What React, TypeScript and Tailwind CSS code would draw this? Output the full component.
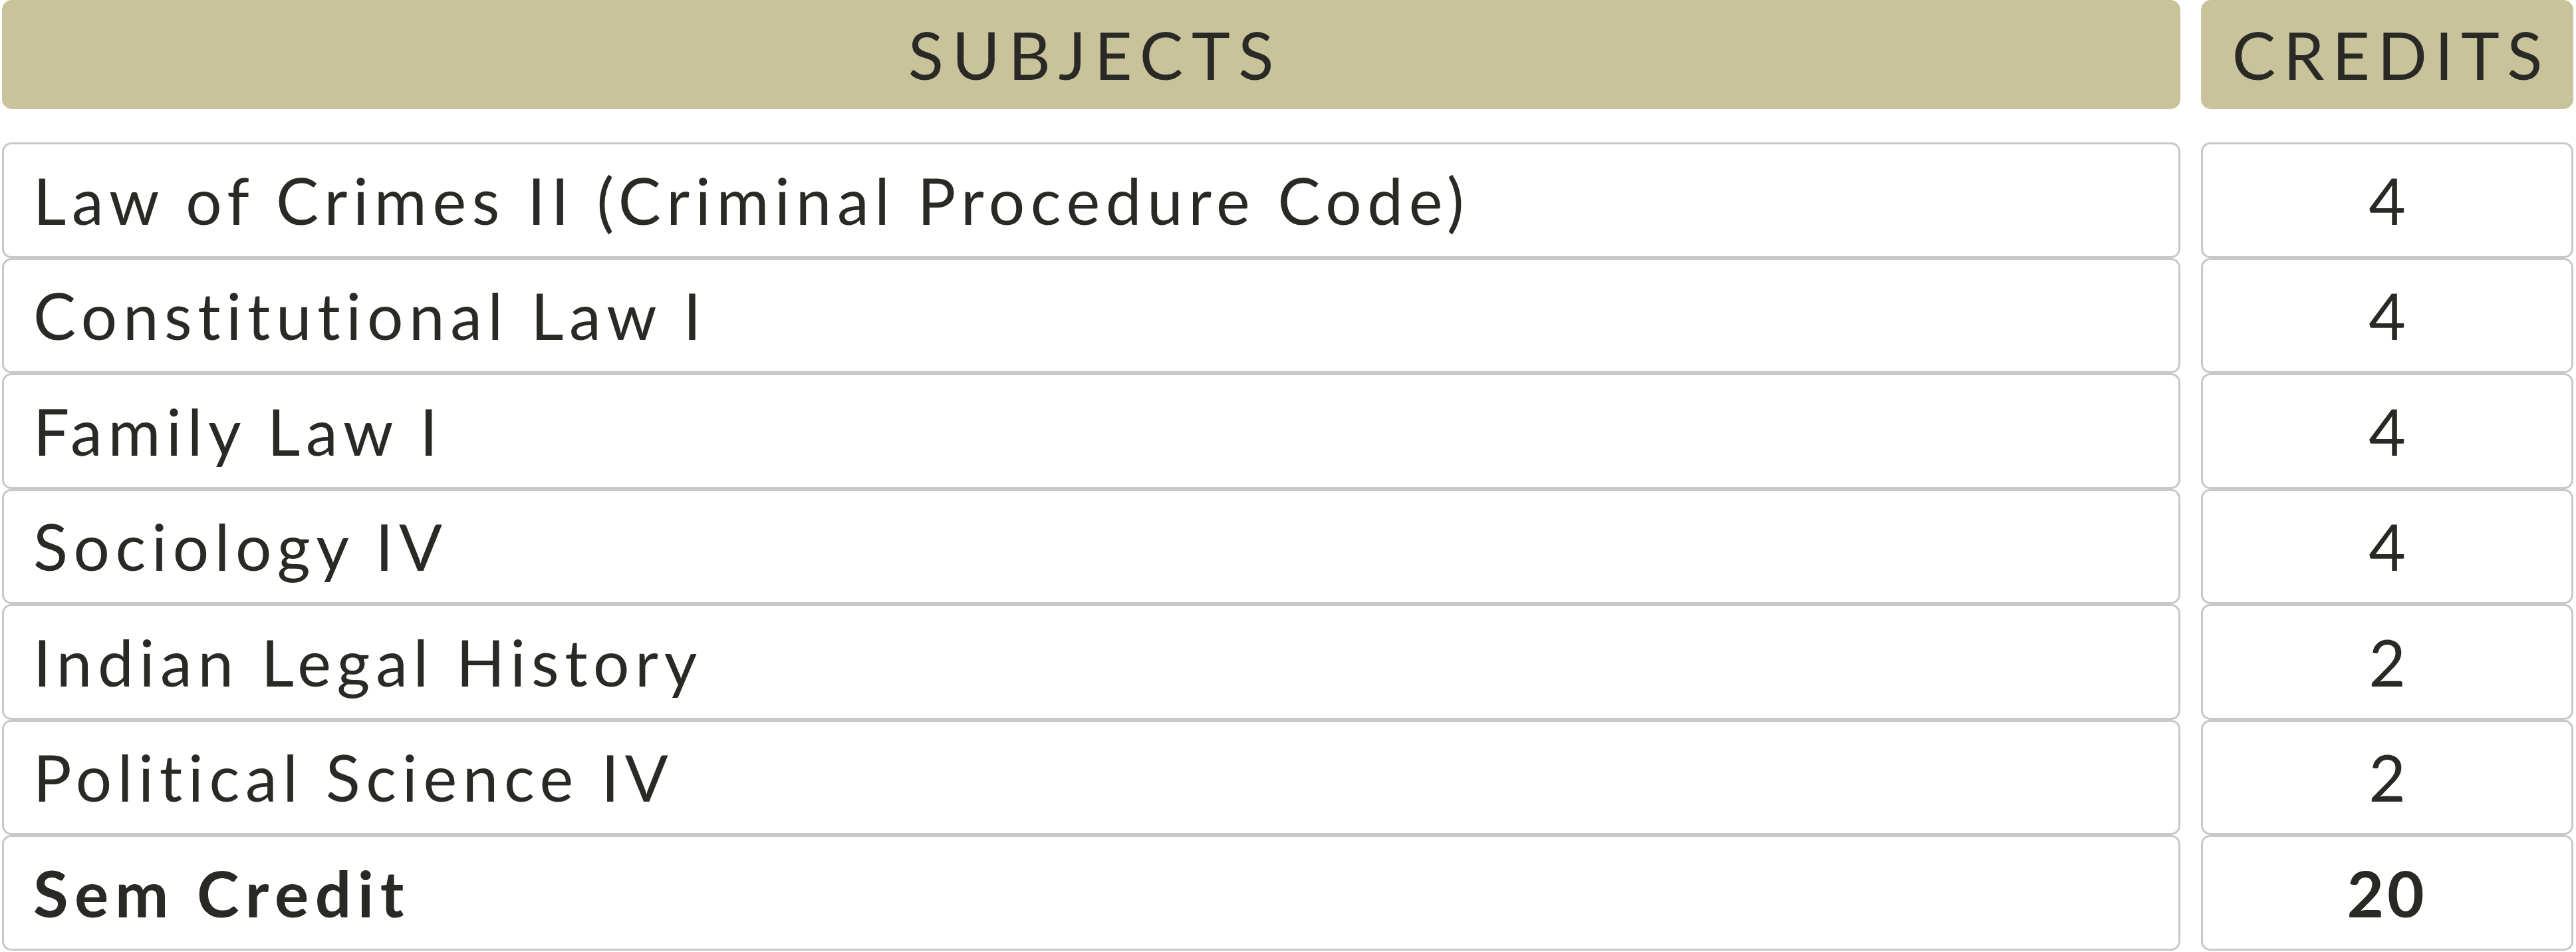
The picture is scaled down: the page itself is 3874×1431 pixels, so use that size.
const rows = [
    { subject: 'Law of Crimes II (Criminal Procedure Code)', credits: '4' },
    { subject: 'Constitutional Law I', credits: '4' },
    { subject: 'Family Law I', credits: '4' },
    { subject: 'Sociology IV', credits: '4' },
    { subject: 'Indian Legal History', credits: '2' },
    { subject: 'Political Science IV', credits: '2' },
]

export default function App() {
    return (
        <div className="w-[3874px] h-[1431px] bg-white pl-[3px] text-[#2a2926] font-['Lato','Noto_Sans',sans-serif] overflow-hidden">
            <div className="grid grid-cols-[3276px_560px] gap-x-[31px]">
                {/* Header */}
                <div className="h-[164px] rounded-[15px] bg-[#c8c39b] flex items-center justify-center pl-[12px] text-[98px] tracking-[0.13em] leading-none">
                    SUBJECTS
                </div>
                <div className="h-[164px] rounded-[15px] bg-[#c8c39b] flex items-center justify-center pl-[12px] text-[98px] tracking-[0.12em] leading-none">
                    CREDITS
                </div>

                <div className="col-span-2 h-[50px]" />

                {/* Rows */}
                {rows.map((row) => (
                    <div key={row.subject} className="contents">
                        <div className="h-[173.5px] border-[3px] border-[#c8c8c8] rounded-[14px] flex items-center pl-[44px] text-[96px] tracking-[0.09em] leading-none">
                            {row.subject}
                        </div>
                        <div className="h-[173.5px] border-[3px] border-[#c8c8c8] rounded-[14px] flex items-center justify-center text-[96px] leading-none">
                            {row.credits}
                        </div>
                    </div>
                ))}

                {/* Total */}
                <div className="h-[173.5px] border-[3px] border-[#c8c8c8] rounded-[14px] flex items-center pl-[44px] text-[96px] font-bold tracking-[0.1em] leading-none">
                    Sem Credit
                </div>
                <div className="h-[173.5px] border-[3px] border-[#c8c8c8] rounded-[14px] flex items-center justify-center text-[96px] font-bold tracking-[0.05em] leading-none">
                    20
                </div>
            </div>
        </div>
    )
}
